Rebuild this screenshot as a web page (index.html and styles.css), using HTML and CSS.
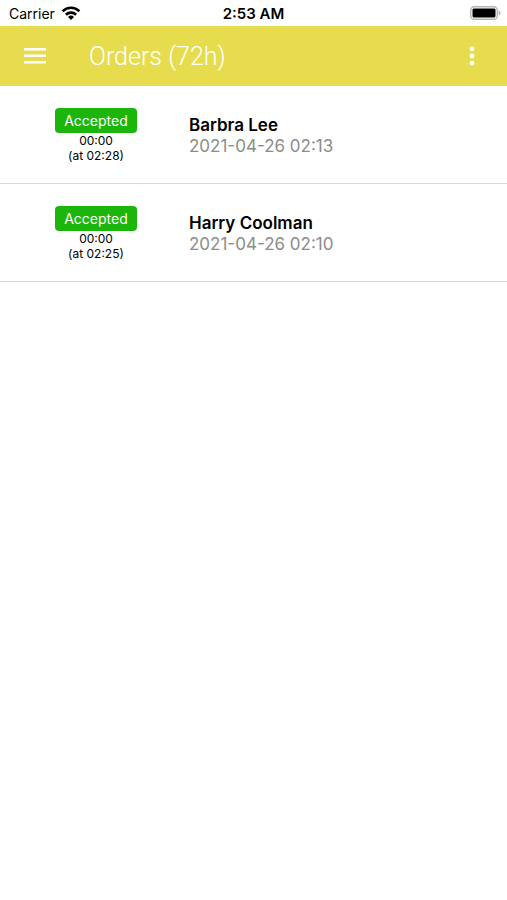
FILE: index.html
```
<!DOCTYPE html>
<html lang="en">
<head>
  <meta charset="UTF-8">
  <meta name="viewport" content="width=device-width, initial-scale=1.0">
  <title>Orders</title>
  <link rel="stylesheet" href="styles.css">
</head>
<body>
  <!-- Phone status bar -->
  <div class="status-bar">
    <div class="carrier">
      <span>Carrier</span>
      <svg class="wifi" width="20" height="14" viewBox="0 0 20 14" fill="none" stroke="#000" stroke-width="2.6">
        <path d="M1.600 5.200a12 12 0 0 1 16.800 0"/>
        <path d="M4.900 8.700a7.300 7.300 0 0 1 10.200 0"/>
        <path d="M10 14L7 11a4.300 4.300 0 0 1 6 0z" fill="#000" stroke="none"/>
      </svg>
    </div>
    <div class="clock">2:53 AM</div>
    <div class="battery">
      <svg width="31" height="14" viewBox="0 0 31 14">
        <rect x="0.7" y="0.7" width="26.6" height="12.6" rx="3.6" fill="#fff" stroke="#b4b4b4" stroke-width="1.4"/>
        <rect x="2.5" y="2.5" width="23" height="9" rx="1.6" fill="#000"/>
        <path d="M28.600 4.500q2 .8 2 2.500t-2 2.500z" fill="#b4b4b4"/>
      </svg>
    </div>
  </div>

  <header class="toolbar">
    <button type="button" class="icon-btn" aria-label="Menu">
      <svg width="24" height="16" viewBox="0 0 24 16" fill="#fff">
        <path d="M1 0h22v2.500H1zM1 6.500h22V9H1zM1 13h22v2.500H1z"/>
      </svg>
    </button>
    <h1>Orders (72h)</h1>
    <button type="button" class="icon-btn" aria-label="More options">
      <svg width="6" height="20" viewBox="0 0 6 20" fill="#fff">
        <circle cx="3" cy="2.800" r="2.400"/>
        <circle cx="3" cy="10" r="2.400"/>
        <circle cx="3" cy="17.200" r="2.400"/>
      </svg>
    </button>
  </header>

  <!-- Order list -->
  <main>
    <ul class="orders">
      <li class="order">
        <div class="status">
          <span class="badge">Accepted</span>
          <span>00:00</span>
          <span>(at 02:28)</span>
        </div>
        <div class="details">
          <h2>Barbra Lee</h2>
          <p>2021-04-26 02:13</p>
        </div>
      </li>
      <li class="order">
        <div class="status">
          <span class="badge">Accepted</span>
          <span>00:00</span>
          <span>(at 02:25)</span>
        </div>
        <div class="details">
          <h2>Harry Coolman</h2>
          <p>2021-04-26 02:10</p>
        </div>
      </li>
    </ul>
  </main>
</body>
</html>
```
FILE: styles.css
```
* {
  margin: 0;
  padding: 0;
  box-sizing: border-box;
}

body {
  background-color: #fff;
  color: #000;
  font-family: Inter, sans-serif;
}

/* Status bar */
.status-bar {
  display: grid;
  grid-template-columns: 1fr auto 1fr;
  align-items: center;
  height: 26px;
  padding: 0 6px;
  font-size: 14px;
}

.carrier {
  display: flex;
  align-items: center;
  gap: 6px;
  padding-left: 3px;
}

.clock {
  font-size: 15px;
  font-weight: 600;
}

.battery {
  display: flex;
  justify-content: flex-end;
}

/* Toolbar */
.toolbar {
  display: flex;
  align-items: center;
  height: 60px;
  padding: 0 17px;
  background-color: #e6dc4e;
  color: #fff;
}

.toolbar h1 {
  flex: 1;
  margin-left: 36px;
  font-family: Roboto, sans-serif;
  font-size: 25px;
  font-weight: 300;
}

.icon-btn {
  display: flex;
  align-items: center;
  justify-content: center;
  width: 36px;
  height: 36px;
  border: none;
  background: none;
  cursor: pointer;
}

/* Orders */
.orders {
  list-style: none;
}

.order {
  display: flex;
  align-items: center;
  gap: 13px;
  height: 98px;
  padding: 2px 16px 0;
  border-bottom: 1px solid #d8d8d8;
}

.status {
  display: flex;
  flex-direction: column;
  align-items: center;
  width: 160px;
  font-size: 12px;
  line-height: 15px;
}

.badge {
  padding: 0 9px;
  border-radius: 4px;
  background-color: #1cb50b;
  color: #fff;
  font-size: 14px;
  line-height: 25px;
}

.details {
  font-size: 17px;
  line-height: 21px;
}

.details h2 {
  font-size: 17px;
  font-weight: 600;
}

.details p {
  color: #8c8c8c;
}
```
